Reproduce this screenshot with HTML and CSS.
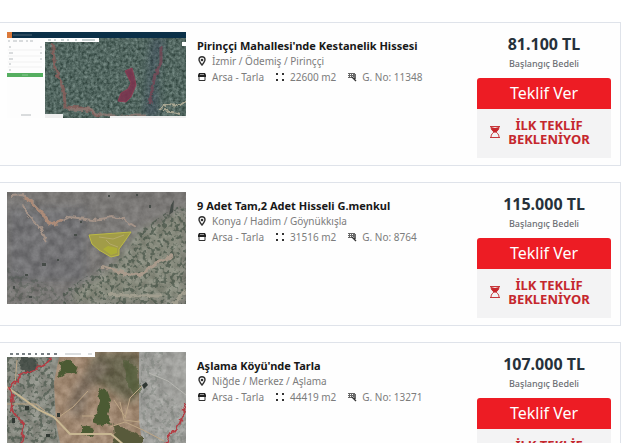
FILE: index.html
```
<!DOCTYPE html>
<html lang="tr">
<head>
<meta charset="utf-8">
<meta name="viewport" content="width=device-width, initial-scale=1">
<title>Arsa - Tarla</title>
<link rel="stylesheet" href="styles.css">
</head>
<body>
<svg class="defs" aria-hidden="true">
  <defs>
    <filter id="forest" x="0" y="0" width="100%" height="100%" color-interpolation-filters="sRGB">
      <feTurbulence type="fractalNoise" baseFrequency="0.32" numOctaves="3" seed="4"/>
      <feColorMatrix values="1.1 0 0 0 -0.22  1.1 0 0 0 -0.15  1.1 0 0 0 -0.17  0 0 0 0 1"/>
    </filter>
    <filter id="grain" x="0" y="0" width="100%" height="100%" color-interpolation-filters="sRGB">
      <feTurbulence type="fractalNoise" baseFrequency="0.12" numOctaves="4" seed="9"/>
      <feColorMatrix values="1.6 0 0 0 -0.32  1.6 0 0 0 -0.33  1.6 0 0 0 -0.34  0 0 0 0 1"/>
    </filter>
    <filter id="scrub" x="0" y="0" width="100%" height="100%" color-interpolation-filters="sRGB">
      <feTurbulence type="fractalNoise" baseFrequency="0.25" numOctaves="2" seed="7"/>
      <feColorMatrix values="0 0 0 0 0.24  0 0 0 0 0.30  0 0 0 0 0.25  7 0 0 0 -3.5" result="c"/>
      <feComposite in="c" in2="SourceGraphic" operator="in"/>
    </filter>
    <filter id="rough" x="-10%" y="-10%" width="120%" height="120%" color-interpolation-filters="sRGB">
      <feTurbulence type="fractalNoise" baseFrequency="0.15" numOctaves="3" seed="2"/>
      <feDisplacementMap in="SourceGraphic" scale="6" xChannelSelector="R" yChannelSelector="G"/>
    </filter>
    <filter id="soft" color-interpolation-filters="sRGB"><feGaussianBlur stdDeviation="4"/></filter>
    <symbol id="pin" viewBox="0 0 10 10"><path fill="none" stroke="#333" stroke-width="1.4" d="M5 9C3 6.500 2 5 2 3.700a3 3 0 0 1 6 0C8 5 7 6.500 5 9Z"/><circle cx="5" cy="4" r="1.300" fill="#333"/></symbol>
    <symbol id="shop" viewBox="0 0 10 10"><path fill="#222" d="M2 1h6l1 2v2H1V3Z"/><path fill="none" stroke="#333" d="M2 5v3.500h6V5"/><path stroke="#999" d="M3 2.500h4"/></symbol>
    <symbol id="area" viewBox="0 0 10 10"><path fill="#333" d="M1 1h2v2H1zM7 1h2v2H7zM1 7h2v2H1zM7 7h2v2H7z"/></symbol>
    <symbol id="parcel" viewBox="0 0 10 10"><path fill="none" stroke="#666" d="M1 1.500h7M1 3.500h6M1 5.500h4M2.500 1v5M4.500 1v5M6.500 1v4"/><path fill="none" stroke="#333" stroke-width="1.400" d="M5 5l4 4M8 2v5"/></symbol>
    <symbol id="hourglass" viewBox="0 0 12 14"><path fill="none" stroke="#c5393c" d="M1 1.500h10M1 12.500h10M2 2c0 3 2 4 3 5-1 1-3 2-3 5M10 2c0 3-2 4-3 5 1 1 3 2 3 5"/><path fill="#c8262b" d="M2 2l4 1 4-1c0 3-2 4-4 6C4 6 2 5 2 2Z"/></symbol>
  </defs>
</svg>

<main class="listings">
  <article class="card">
    <svg class="photo" viewBox="0 0 179 86" role="img" aria-label="Pirinççi">
      <rect width="179" height="86" fill="#fdfdfd"/>
      <svg x="38" y="6" width="141" height="80" viewBox="38 6 141 80">
        <rect x="38" y="6" width="141" height="80" fill="#526861"/>
        <rect x="38" y="6" width="141" height="80" filter="url(#forest)" opacity=".38"/>
        <path d="M145 6l-8 80h15l-3-45 9-35Z" fill="#38445c" opacity=".45" filter="url(#soft)"/>
        <g fill="none" filter="url(#rough)">
          <path d="M45 10l3 25 9 23 1 17 16 1 20 8" stroke="#8c5e5a" stroke-width="3" opacity=".8"/>
          <path d="M60 77l22 1 18 6h40" stroke="#907973" stroke-width="3" opacity=".8"/>
          <path d="M154 14v17l-6 12-3 14-2 15" stroke="#754755" stroke-width="3" opacity=".8"/>
          <path d="M152 77l9-5 12 1 8-5M156 78l18 4" stroke="#a9a793" stroke-width="2"/>
        </g>
        <path d="M118 39l7-3 3 12 1 5-5 12-5 5-8-1 3-8 7-4 3-6Z" fill="#7b354f" opacity=".9" stroke="#903b52"/>
        <path d="M38 82h18v4H38zM103 84h76v2h-76z" fill="#eee"/>
        <path d="M38 6h54v4H38zM175 10h4v4h-4z" fill="#fff"/>
        <path d="M41 8h3m3 0h2m5 0h3m3 0h2m6 0h2m5 0h13" stroke="#9aa"/>
      </svg>
      <rect width="179" height="6" fill="#0b3048"/>
      <rect width="5" height="6" fill="#db793a"/>
      <path d="M6 3h19" stroke="#4d6272"/>
      <path d="M1 9h2m3 0h4m2 0h4m3 0h2m2 0h3M2 15h2m-2 6h4m-4 6h4m-4 5h2m-2 6h2M33 15h2m-2 6h2m-2 6h2M14 83h10" stroke="#b5babd"/>
      <path d="M1 18h34M1 24h34M1 30h34M1 35h34" stroke="#f1f1f1"/>
      <rect y="41" width="36" height="4" fill="#55ae60"/>
      <path d="M15 43h6" stroke="#87c790"/>
    </svg>
    <div class="details">
      <h2>Pirinççi Mahallesi'nde Kestanelik Hissesi</h2>
      <p class="place"><svg><use href="#pin"/></svg>İzmir / Ödemiş / Pirinççi</p>
      <ul class="facts">
        <li><svg><use href="#shop"/></svg>Arsa - Tarla</li>
        <li><svg><use href="#area"/></svg>22600 m2</li>
        <li><svg><use href="#parcel"/></svg>G. No: 11348</li>
      </ul>
    </div>
    <div class="offer">
      <strong class="price">81.100 TL</strong>
      <span class="caption">Başlangıç Bedeli</span>
      <button type="button">Teklif Ver</button>
      <div class="status"><svg><use href="#hourglass"/></svg><span>İLK TEKLİF<br>BEKLENİYOR</span></div>
    </div>
  </article>

  <article class="card">
    <svg class="photo" viewBox="0 0 179 112" role="img" aria-label="Göynükkışla">
      <rect width="179" height="112" fill="#7b7977"/>
      <path d="M0 15h80v75H0Z" fill="#6d6e73" opacity=".7" filter="url(#soft)"/>
      <path d="M179 15l-52 27-26 35-35 22v13h113Z" fill="#8b8f80" filter="url(#soft)"/>
      <rect width="179" height="112" filter="url(#grain)" opacity=".12"/>
      <path d="M179 10l-22 12-27 19-10 22-25 12-38 23-5 14h127Z" filter="url(#scrub)" opacity=".6"/>
      <path d="M0 75l15 5 30 15 15 17H0Z" filter="url(#scrub)" opacity=".3"/>
      <g fill="none" filter="url(#rough)">
        <path d="M4 4l13-1 11 10 9 10 7 9 10-4 9-3 23 3 19-3 11 2 13 8" stroke="#a49388" stroke-width="2"/>
        <path d="M18 5l19 18 6 9 11-3" stroke="#ac8b78" stroke-width="3"/>
        <path d="M16 12l5 11 12 12 7 15" stroke="#a49388" stroke-width="2"/>
        <path d="M94 74l22 7 16 3 21-15 13-5" stroke="#a99a8b" stroke-width="3"/>
        <path d="M100 102l28 2h26M166 112l13-14" stroke="#a19e8f" stroke-width="3"/>
      </g>
      <path d="M82 43l42-3-9 13-3 4v6l-8 2-12-7-7-6Z" fill="#a19c48" stroke="#bcba44"/>
      <path d="M99 48l4 4 8 3M92 45l14 2 11-4" fill="none" stroke="#b5aa6b"/>
      <path d="M96 57l8 6 6-2v-5l-9-2Z" fill="#b6bb2c" opacity=".6"/>
      <path d="M129 2h2v2h-2zM73 29h2v2h-2zM67 42h3v2h-3zM35 71h4v3h-4zM18 82h3v2h-3zM50 67h2v2h-2zM6 94h2v3H6zM22 104h3v2h-3zM101 3h2v2h-2zM142 13h2v3h-2zM164 13l3-5-1 12-4 3Z" fill="#464c48"/>
    </svg>
    <div class="details">
      <h2>9 Adet Tam,2 Adet Hisseli G.menkul</h2>
      <p class="place"><svg><use href="#pin"/></svg>Konya / Hadim / Göynükkışla</p>
      <ul class="facts">
        <li><svg><use href="#shop"/></svg>Arsa - Tarla</li>
        <li><svg><use href="#area"/></svg>31516 m2</li>
        <li><svg><use href="#parcel"/></svg>G. No: 8764</li>
      </ul>
    </div>
    <div class="offer">
      <strong class="price">115.000 TL</strong>
      <span class="caption">Başlangıç Bedeli</span>
      <button type="button">Teklif Ver</button>
      <div class="status"><svg><use href="#hourglass"/></svg><span>İLK TEKLİF<br>BEKLENİYOR</span></div>
    </div>
  </article>

  <article class="card">
    <svg class="photo" viewBox="0 0 179 112" role="img" aria-label="Aşlama">
      <rect width="179" height="112" fill="#a88c72"/>
      <path d="M0 0h53l-6 30 2 40 8 42H0Z" fill="#8e9187"/>
      <path d="M88 0h45v44l-10 8-26-17-18-6Z" fill="#69654b" filter="url(#soft)"/>
      <path d="M91 5L68 35l-8 23 14 10 10-33 20-19Z" fill="#7b6d5e" opacity=".8" filter="url(#soft)"/>
      <path d="M132 0h47v112h-40l-7-42Z" fill="#a8a9a5"/>
      <rect width="179" height="112" filter="url(#grain)" opacity=".15"/>
      <path d="M0 5h45l2 26 1 37 5 44H0Z" filter="url(#scrub)" opacity=".55"/>
      <path d="M134 0h22l-3 36 26 22v54h-36l-9-40Z" filter="url(#scrub)" opacity=".18"/>
      <g filter="url(#rough)" fill="#4b5a33">
        <path d="M53 11l8-4 11 8-3 8-8-3-9 6zM91 36l8 2 5 13-3 12 4 10-10-3-6-10 3-11zM90 60l10 8-4 6-11-4zM75 73l12 5-2 7-10-3z"/>
        <path d="M106 72l16 6 13 8v26h-23l-5-24z" fill="#585a3b"/>
        <path d="M117 8l12 6 5 25-7 5-9-18z" opacity=".6"/>
        <path d="M15 5h11l5 10-8 7-11-5z" fill="#3d4640" opacity=".8"/>
      </g>
      <g fill="none">
        <path d="M0 35l14 10 18 13 15 7 16 17h41l13 11" stroke="#c8b792" stroke-width="2"/>
        <path d="M0 52h29l9 7M135 34l-12 12-5 20M107 48l12 18M113 50l4 18 16 2M103 75l15-5 18 8 21 11M75 64h12M52 65l14-10 15-16M10 8L8 34" stroke="#bda686"/>
        <path d="M44 7L27 18l-11 4L2 35l4 12-2 10 12 15-1 40M179 52l-6 18-12 17-9 25" stroke="#b33c43" stroke-width="2" filter="url(#rough)"/>
        <path d="M142 21l19 8 18 14" stroke="#b8b8b2"/>
      </g>
      <path d="M135 33l4-3 2 3-4 4zM18 54h4v4h-4zM5 66h3v5H5zM39 82h4v3h-4zM50 61h3v4h-3z" fill="#303833"/>
      <path d="M0 0h88v5H0z" fill="#fff"/>
      <path d="M3 2h3m3 0h3m3 0h3m3 0h3m4 0h2m4 0h3m3 0h3m4 0h3" stroke="#7a8185" stroke-width="2"/>
      <path d="M58 2h16m7 0h4" stroke="#b7bdc0"/>
    </svg>
    <div class="details">
      <h2>Aşlama Köyü'nde Tarla</h2>
      <p class="place"><svg><use href="#pin"/></svg>Niğde / Merkez / Aşlama</p>
      <ul class="facts">
        <li><svg><use href="#shop"/></svg>Arsa - Tarla</li>
        <li><svg><use href="#area"/></svg>44419 m2</li>
        <li><svg><use href="#parcel"/></svg>G. No: 13271</li>
      </ul>
    </div>
    <div class="offer">
      <strong class="price">107.000 TL</strong>
      <span class="caption">Başlangıç Bedeli</span>
      <button type="button">Teklif Ver</button>
      <div class="status"><svg><use href="#hourglass"/></svg><span>İLK TEKLİF<br>BEKLENİYOR</span></div>
    </div>
  </article>
</main>
</body>
</html>
```
FILE: styles.css
```
* { box-sizing: border-box; }

body {
  margin: 0;
  background: #fff;
  color: #7c7c7c;
  font-family: "Noto Sans", "Open Sans", sans-serif;
  font-size: 10px;
}

.defs {
  position: absolute;
  width: 0;
  height: 0;
}

.listings {
  display: grid;
  gap: 16px;
  padding: 22px 8px 22px 0;
}

.card {
  display: grid;
  grid-template-columns: 179px 1fr 134px;
  align-items: start;
  gap: 11px;
  padding: 9px 9px 7px 7px;
  border: 1px solid #dfe3ea;
  border-left: 0;
  background: #fefefe;
}

.photo {
  display: block;
  width: 100%;
}

.details { padding-top: 6px; }

h2 {
  margin: 0;
  color: #181818;
  font-size: 11px;
  line-height: 16px;
}

.place {
  display: flex;
  align-items: center;
  gap: 5px;
  margin: 0 0 1px;
  line-height: 14px;
}

.details svg {
  width: 10px;
  height: 10px;
}

.facts {
  display: flex;
  gap: 11px;
  margin: 0;
  padding: 0;
  list-style: none;
  line-height: 16px;
  white-space: nowrap;
}

.facts li {
  display: flex;
  align-items: center;
  gap: 5px;
}

.offer {
  display: flex;
  flex-direction: column;
  text-align: center;
}

.price {
  color: #26313a;
  font-size: 16px;
  line-height: 24px;
}

.caption {
  margin-bottom: 7px;
  color: #6c6e73;
  font-size: 9px;
  font-weight: 500;
  line-height: 15px;
}

button {
  height: 31px;
  padding: 0;
  border: 0;
  border-radius: 3px 3px 0 0;
  background: #ed1c24;
  color: #fff;
  font-family: inherit;
  font-size: 16px;
  line-height: 31px;
  cursor: pointer;
}

.status {
  display: flex;
  align-items: center;
  justify-content: center;
  gap: 7px;
  height: 49px;
  padding: 0 9px 3px 0;
  background: #f3f3f4;
  color: #c5272d;
  font-size: 13px;
  font-weight: 700;
  line-height: 14px;
}

.status svg {
  width: 12px;
  height: 14px;
}
```
